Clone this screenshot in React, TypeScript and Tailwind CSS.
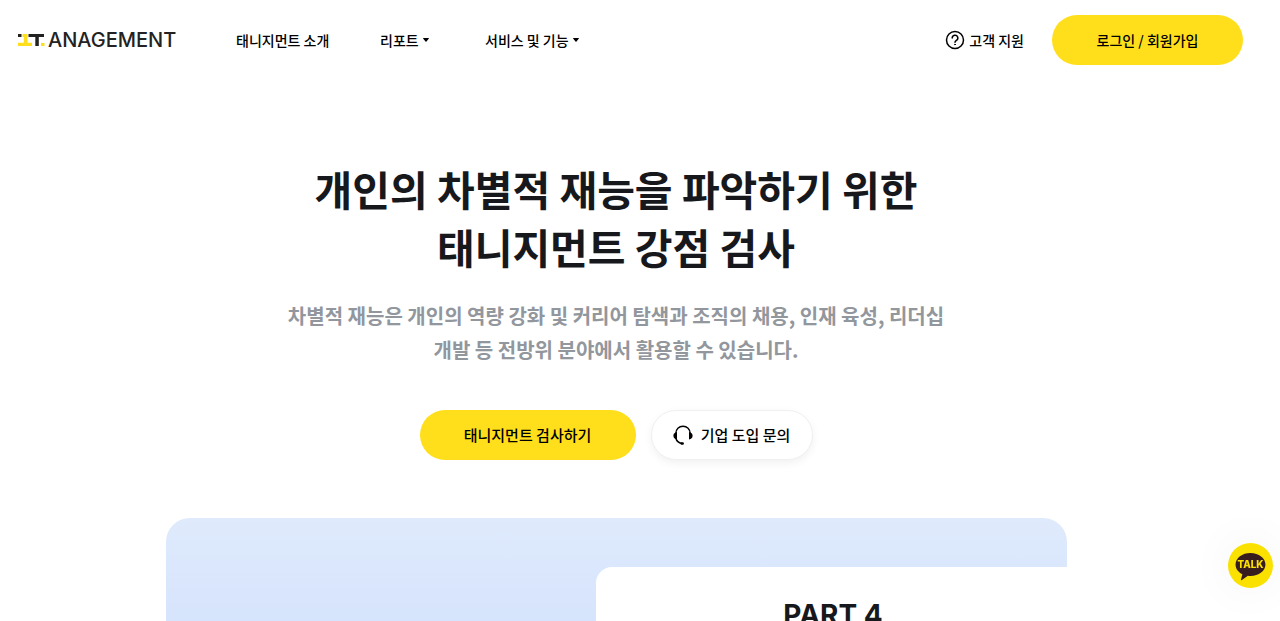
function LogoMark() {
  return (
    <svg width="29" height="14" viewBox="0 0 29 14" aria-hidden="true">
      <rect x="1" y="1" width="3.500" height="3" fill="#222" />
      <path d="M5.500 1h5v8.800H15V13H1V9.800h5.800V4H5.500z" fill="#ffdf1b" />
      <path d="M11.500 1H27v3h-5.200v9h-3.500V4h-6.800z" fill="#222" />
      <rect x="24" y="10" width="3.500" height="3" fill="#ffdf1b" />
    </svg>
  );
}

function Caret() {
  return (
    <svg width="6" height="4" viewBox="0 0 6 4" aria-hidden="true">
      <path d="M0.300 0h5.400q.5.300 0 .8L3.500 3.500q-.5.500-1 0L.3.800Q-.2.300.3 0z" fill="#000" />
    </svg>
  );
}

function HelpIcon() {
  return (
    <svg width="20" height="20" viewBox="0 0 20 20" fill="none" stroke="#000" strokeWidth="1.500" strokeLinecap="round" strokeLinejoin="round" aria-hidden="true">
      <circle cx="10" cy="10" r="8.500" />
      <path d="M7.200 8a2.800 2.800 0 1 1 4.200 2.400c-.9.600-1.400 1-1.400 1.800" />
      <circle cx="10" cy="14.500" r=".4" fill="#000" strokeWidth="1" />
    </svg>
  );
}

function HeadsetIcon() {
  return (
    <svg width="20" height="20" viewBox="0 0 20 20" fill="none" aria-hidden="true">
      <path d="M2.800 8.500C2.800 4 6 1.200 10 1.200S17.200 4 17.200 8.500M2.800 13c.7 3 2.700 4.900 6 5.500" stroke="#000" strokeWidth="1.400" />
      <path d="M4 7v7.500C1.800 14.300.4 12.900.4 10.800S1.800 7.200 4 7zM16 7v7.500c2.200-.2 3.600-1.600 3.600-3.700S18.200 7.200 16 7z" fill="#000" />
      <rect x="7.500" y="17.300" width="3.400" height="2.400" rx="1.200" fill="#000" />
    </svg>
  );
}

function TalkButton() {
  return (
    <button
      type="button"
      aria-label="TALK"
      className="fixed right-[7px] bottom-[33px] h-[45px] w-[45px] rounded-full bg-[#fae100] shadow-[0_0_48px_rgba(0,0,0,0.06)]"
    >
      <svg width="45" height="45" viewBox="0 0 46 46" aria-hidden="true">
        <path
          d="M23 10.300c-8.500 0-15.300 5-15.300 11.800 0 4.300 2.800 7.900 7 9.900l-1.400 5.300c-.2.700.4 1 .9.600l6.100-4.300c.9.100 1.800.2 2.700.2 8.500 0 15.300-5.200 15.300-11.700S31.500 10.300 23 10.300z"
          fill="#371d1e"
        />
        <text x="23" y="26" textAnchor="middle" fontSize="10" fontWeight="800" fill="#fae100" className="font-['Inter',sans-serif]">
          TALK
        </text>
      </svg>
    </button>
  );
}

export default function App() {
  return (
    <div className="flex h-screen flex-col overflow-hidden bg-white font-['Noto_Sans_CJK_KR',sans-serif] font-medium text-black">
      <header className="flex h-20 shrink-0 items-center pr-[37px] pl-[17px] text-sm">
        <a href="#" className="flex w-[219px] items-center gap-[2px]">
          <LogoMark />
          <span className="font-['Inter',sans-serif] text-[20px] leading-5 font-medium text-[#222]">ANAGEMENT</span>
        </a>
        <nav className="flex grow items-center">
          <a href="#" className="w-36">태니지먼트 소개</a>
          <button type="button" className="flex w-[105px] items-center gap-1">
            리포트 <Caret />
          </button>
          <button type="button" className="flex items-center gap-1">
            서비스 및 기능 <Caret />
          </button>
        </nav>
        <a href="#" className="mr-7 flex items-center gap-1">
          <HelpIcon />
          고객 지원
        </a>
        <button type="button" className="h-[50px] w-[191px] rounded-full bg-[#ffdf1b]">
          로그인 / 회원가입
        </button>
      </header>

      <main className="flex grow flex-col items-center pr-12 text-center">
        <h1 className="mt-[79px] text-[41px] leading-[58px] font-bold text-[#17181c]">
          개인의 차별적 재능을 파악하기 위한
          <br />
          태니지먼트 강점 검사
        </h1>
        <p className="mt-6 text-[20px] leading-[34px] font-bold text-[#92969d]">
          차별적 재능은 개인의 역량 강화 및 커리어 탐색과 조직의 채용, 인재 육성, 리더십
          <br />
          개발 등 전방위 분야에서 활용할 수 있습니다.
        </p>
        <div className="mt-[43px] flex gap-[15px] text-[15px]">
          <button type="button" className="h-[50px] w-[216px] rounded-full bg-[#ffdf1b]">
            태니지먼트 검사하기
          </button>
          <button
            type="button"
            className="flex h-[50px] w-[162px] items-center justify-center gap-2 rounded-full border border-[#f0f0f0] bg-white shadow-[0_3px_8px_rgba(0,0,0,0.06)]"
          >
            <HeadsetIcon />
            기업 도입 문의
          </button>
        </div>
        <section className="mt-[58px] flex w-full max-w-[901px] grow justify-end overflow-hidden rounded-t-3xl bg-linear-to-b from-[#dfeafc] to-[#d5e3fc] pt-[49px]">
          <div className="w-[471px] rounded-tl-2xl bg-white pt-8 pl-1">
            <h2 className="font-['Inter',sans-serif] text-[28px] leading-8 font-bold text-[#17181c]">PART 4</h2>
          </div>
        </section>
      </main>

      <TalkButton />
    </div>
  );
}
